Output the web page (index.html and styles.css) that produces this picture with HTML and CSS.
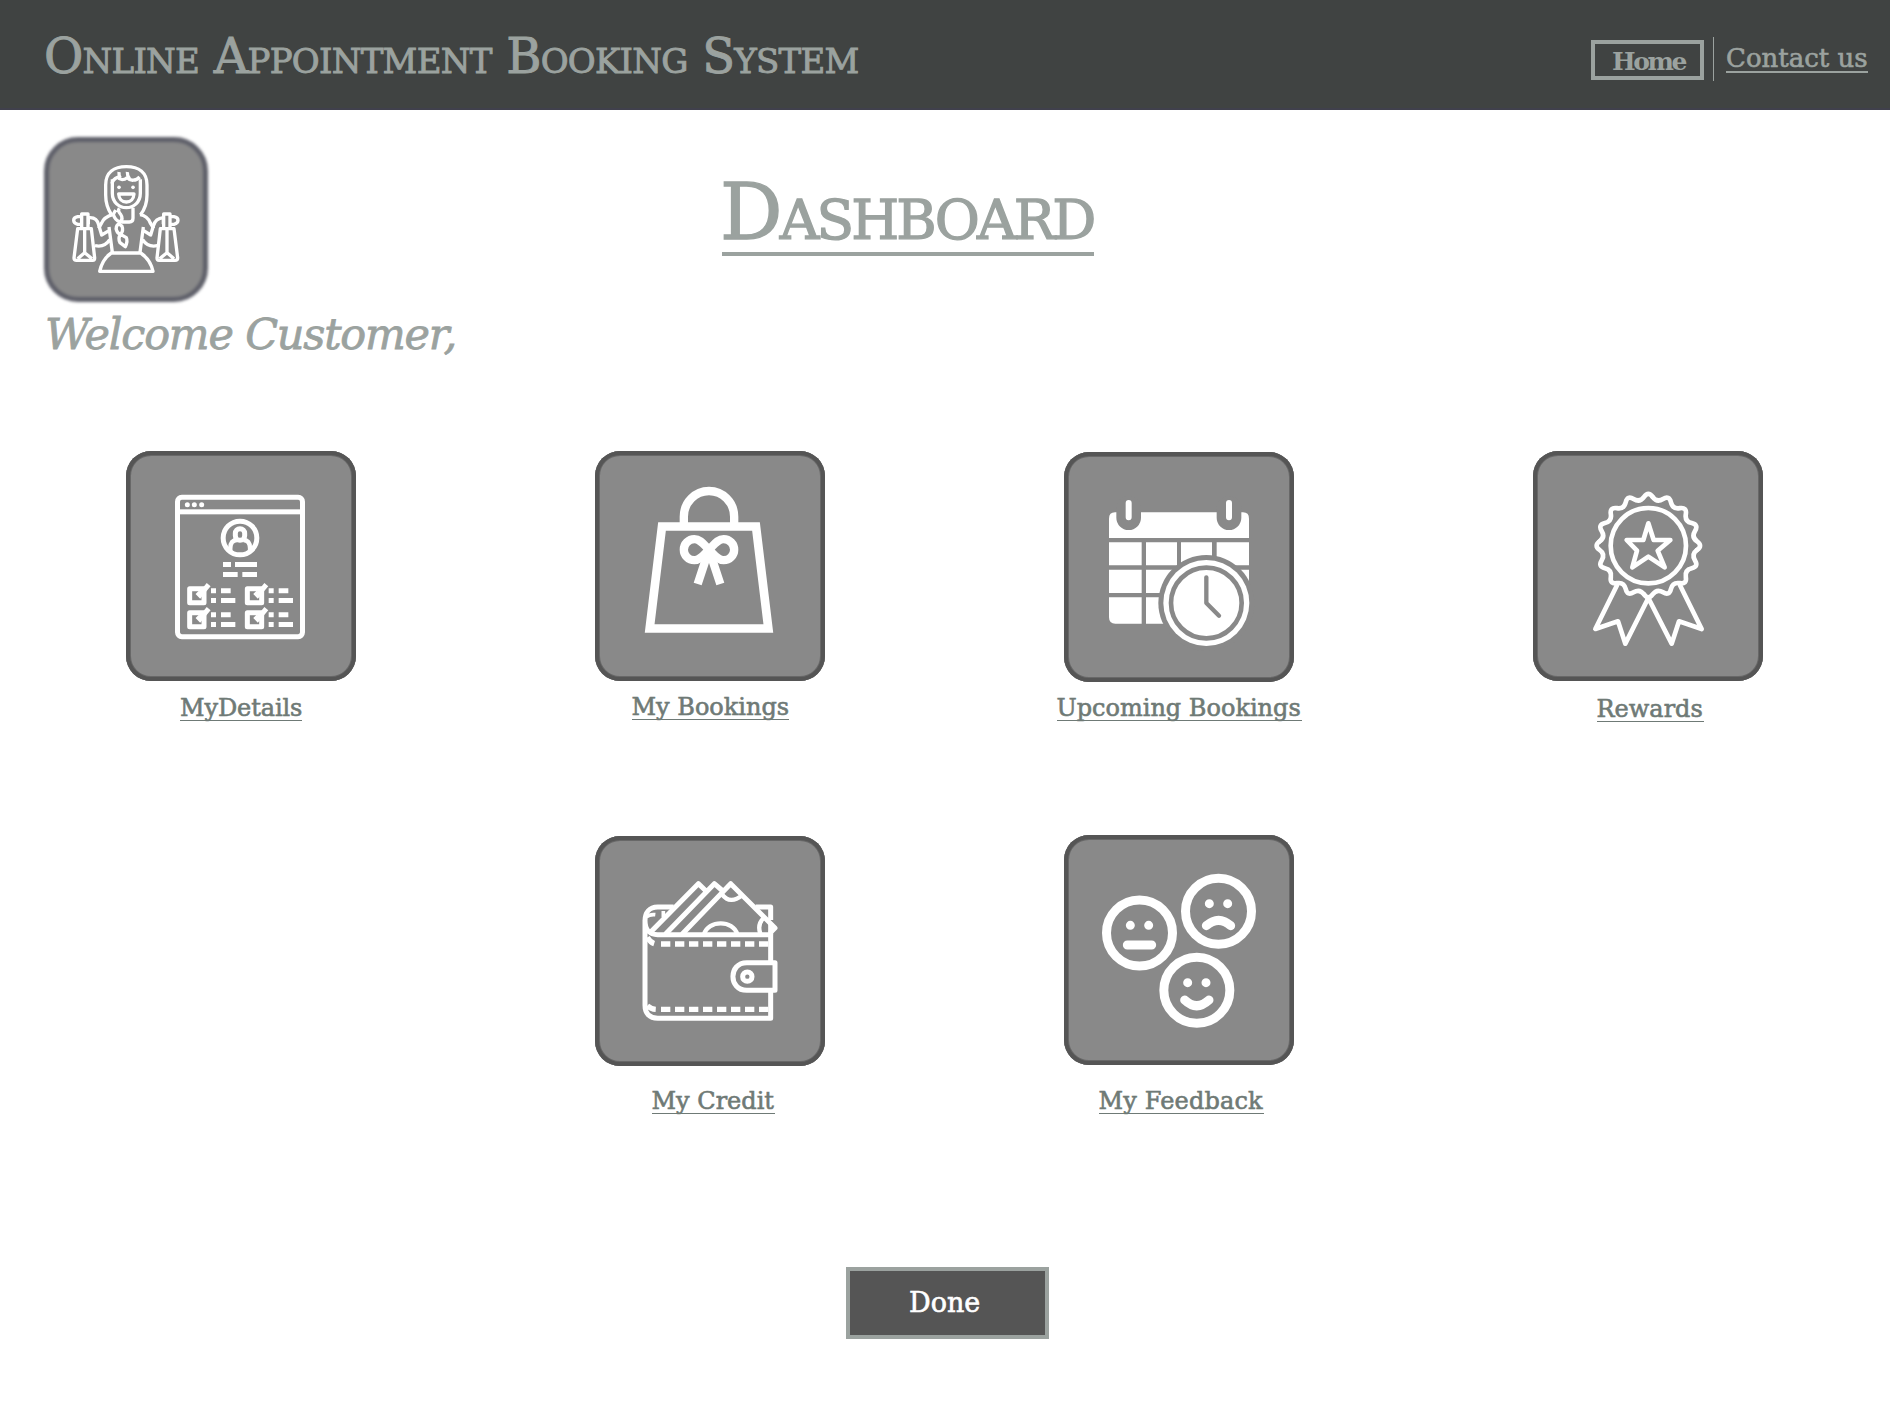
FILE: index.html
```html
<!DOCTYPE html>
<html lang="en">
<head>
<meta charset="utf-8">
<title>Dashboard</title>
<link rel="stylesheet" href="styles.css">
</head>
<body>
<header class="topbar">
  <div class="brand">Online Appointment Booking System</div>
  <nav class="nav">
    <a class="nav-home">Home</a>
    <span class="nav-divider"></span>
    <a class="nav-contact">Contact us</a>
  </nav>
</header>
<main>
  <section class="intro">
    <div class="profile">
      <div class="avatar">
        <svg viewBox="45 39 486 489" width="162" height="163" fill="none" stroke="#fff" stroke-width="10" stroke-linejoin="round">
          <path d="M244 268C232 250 227 232 227 210V180C227 142 252 125 289 125S351 142 351 180V210C351 236 344 254 331 270"/>
          <path d="M247 163V205C247 232 267 248 289 248S331 232 331 205V163"/>
          <path d="M246 176C248 166 256 160 263 157C270 166 282 166 291 158C301 169 318 168 329 156M267 141Q266 152 271 159M292 141Q291 152 299 162"/>
          <circle cx="267" cy="187" r="5.5" fill="#fff" stroke="none"/><circle cx="309" cy="187" r="5.5" fill="#fff" stroke="none"/>
          <path d="M266 207H312C311 222 302 231 289 231S267 222 266 207Z"/>
          <path d="M309 248V280Q309 291 298 291H274M268 250Q262 258 272 268Q281 281 270 291Q255 286 250 268L257 255"/>
          <path d="M267 296Q255 304 260 317Q264 327 272 328Q281 316 276 304ZM272 328Q263 339 270 353L286 365Q294 349 289 338Z"/>
          <path d="M248 269Q222 276 215 294L206 310M330 269Q352 272 361 294L371 310"/>
          <path d="M177 278Q201 276 206 300L215 330L237 317M400 278Q376 280 370 303L362 330L341 317M237 306L247 382M340 306L330 382M195 362Q224 368 239 344M382 362Q353 368 338 344"/>
          <path d="M244 384H332C350 396 364 416 369 439H209C214 416 226 396 244 384Z"/>
          <g id="bags"><path d="M154 275H143Q131 277 131 286T143 298H154M175 275V298M155 310V267H174V310M143 311H184L194 399Q194 406 188 406H140Q132 406 132 399ZM164 312V381M143 401L164 383L186 401"/></g>
          <use href="#bags" transform="matrix(-1 0 0 1 575 0)"/>
        </svg>
      </div>
      <p class="welcome">Welcome Customer,</p>
    </div>
    <h1 class="page-title">Dashboard</h1>
  </section>

  <section class="tiles">
    <a class="item">
      <div class="tile">
        <svg viewBox="33 33 690 690" width="230" height="230" fill="#fff">
          <rect x="187.500" y="172" width="375" height="418" rx="13" fill="none" stroke="#fff" stroke-width="15"/>
          <rect x="190" y="208" width="370" height="15"/>
          <circle cx="217" cy="194" r="7.500"/><circle cx="238" cy="194" r="7.500"/><circle cx="260" cy="194" r="7.500"/>
          <g fill="none" stroke="#fff" stroke-width="15"><circle cx="375" cy="294" r="50.500"/><rect x="361" y="266" width="28" height="35" rx="14"/><path d="M346 337V325Q346 300 366 300M405 337V325Q405 300 385 300" stroke-width="13"/></g>
          <path d="M324 366h24v15h-24zM360 366h66v15h-66zM324 396h44v15h-44zM382 396h44v15h-44z"/>
          <g id="check"><path fill="none" stroke="#fff" stroke-width="15" stroke-linejoin="round" d="M224 446H267V488H224Z"/><path fill="none" stroke="#fff" stroke-width="15" d="M247 457L255 465L281 434"/><path d="M288 445h15v15h-15zM318 445h29v15h-29zM288 474h15v15h-15zM318 474h43v15h-43z"/></g>
          <use href="#check" x="173"/><use href="#check" y="72"/><use href="#check" x="173" y="72"/>
        </svg>
      </div>
      <span class="label l-details">MyDetails</span>
    </a>
    <a class="item">
      <div class="tile">
        <svg viewBox="30 33 690 690" width="230" height="230" fill="none" stroke="#fff" stroke-width="25">
          <path d="M231 259.500H513L550 565.500H194Z" stroke-width="26"/>
          <path d="M296.500 258V230A75.500 77 0 0 1 447.500 230V258"/>
          <path d="M372 329C358 316 347 297.500 328 297.500A31.500 31.500 0 0 0 328 360.500C347 360.500 358 342 372 329C386 316 397 297.500 416 297.500A31.500 31.500 0 0 1 416 360.500C397 360.500 386 342 372 329"/>
          <path d="M370 335L338 432M374 335L406 432"/>
        </svg>
      </div>
      <span class="label l-bookings">My Bookings</span>
    </a>
    <a class="item item-upcoming">
      <div class="tile">
        <svg viewBox="57 36 690 690" width="230" height="230">
          <path fill="#fff" d="M192 236Q192 217 210 217H594Q612 217 612 236V294H192ZM192 307H290V376H192ZM303 307H396V376H303ZM408 307H501V376H408ZM515 307H612V376H515ZM192 389H290V459H192ZM303 389H396V459H303ZM515 389H612V459H515ZM192 472H290V551H211Q192 551 192 532ZM303 472H396V551H303Z"/>
          <path stroke="#898989" stroke-width="74" stroke-linecap="round" d="M251 205V233M552 205V233"/>
          <path stroke="#fff" stroke-width="18" stroke-linecap="round" d="M251 189V232M552 189V232"/>
          <circle cx="484" cy="489" r="144" fill="#898989"/><circle cx="484" cy="489" r="129" fill="#fff"/><circle cx="484" cy="489" r="106" fill="none" stroke="#898989" stroke-width="14"/>
          <path d="M484 412V489L522 527" fill="none" stroke="#898989" stroke-width="13" stroke-linecap="round" stroke-linejoin="round"/>
        </svg>
      </div>
      <span class="label l-upcoming">Upcoming Bookings</span>
    </a>
    <a class="item">
      <div class="tile">
        <svg viewBox="39 33 690 690" width="230" height="230" fill="none" stroke="#fff" stroke-width="14" stroke-linecap="round" stroke-linejoin="round">
          <g transform="translate(385 317)">
            <path id="scallop" d="M12.800 -146.300Q25.600 -128.500 44.200 -140Q62.800 -151.500 67.800 -130.200Q72.800 -108.900 94.400 -112.500Q116 -116 112.500 -94.400Q108.900 -72.800 130.200 -67.800Q151.500 -62.800 140 -44.200Q128.500 -25.600 146.300 -12.800Q164 0 146.300 12.800"/>
            <use href="#scallop" transform="rotate(90)"/><use href="#scallop" transform="rotate(180)"/><use href="#scallop" transform="rotate(270)"/>
          </g>
          <circle cx="385" cy="317" r="113"/>
          <path d="M385 250L401 300H451L413 332L434 382L385 350L337 382L351 332L320 300H370Z"/>
          <path d="M291 436L226 567L294 544L316 611L385 474L455 611L477 544L545 567L480 436"/>
        </svg>
      </div>
      <span class="label l-rewards">Rewards</span>
    </a>
    <a class="item item-credit">
      <div class="tile">
        <svg viewBox="30 33 690 690" width="230" height="230" fill="none" stroke="#fff" stroke-width="15" stroke-linejoin="round">
          <path d="M266 246H218C193 246 180 263 180 287C180 313 194 329 218 329H557V580H218C193 580 180 565 180 541V285"/>
          <path d="M512 246H557V285M557 295V329"/>
          <path d="M198 320L340 176L360 195M241 328L388 176L410 195M291 328L437 176L570 309L555 324"/>
          <path d="M411 208Q436 240 471 211M357 328C369 284 445 284 457 328M536 279Q516 298 526 326" stroke-width="13"/>
          <path d="M184 276Q194 267 211 269M235 258V277" stroke-width="11"/>
          <path d="M187 337Q199 357 215 357M187 542Q199 553 215 553M228 357H554M228 553H554" stroke-dasharray="28 14" stroke-width="16"/>
          <path fill="#898989" d="M570 413H485C430 413 430 496 485 496H570Z"/>
          <circle cx="487" cy="455" r="14"/>
        </svg>
      </div>
      <span class="label l-credit">My Credit</span>
    </a>
    <a class="item item-feedback">
      <div class="tile">
        <svg viewBox="27 30 690 690" width="230" height="230" fill="none" stroke="#fff" stroke-width="27" stroke-linecap="round">
          <g id="face"><circle cx="253.500" cy="324" r="99"/><path d="M226 301h.01M281 301h.01"/></g>
          <use href="#face" x="237" y="-65"/><use href="#face" x="172" y="172"/>
          <path d="M217 360H290M454 302Q491 270 527 302M389 525Q425 559 462 525"/>
        </svg>
      </div>
      <span class="label l-feedback">My Feedback</span>
    </a>
  </section>
  <button class="done">Done</button>
</main>
</body>
</html>
```
FILE: styles.css
```css
* { box-sizing: border-box; }
body { margin: 0; width: 1890px; height: 1417px; overflow: hidden; background: #fff; font-family: "DejaVu Serif", serif; color: #9ba29f; }
.topbar { display: flex; justify-content: space-between; height: 110px; background: #404342; border-bottom: 2px solid #40404c; }
.brand { padding-left: 44px; font-size: 48px; line-height: 112px; font-variant: small-caps; letter-spacing: -0.75px; white-space: nowrap; -webkit-text-stroke: 0.9px; }
.nav { display: flex; align-items: flex-start; padding-right: 22px; }
.nav-home { width: 113px; height: 40px; margin-top: 40px; border: 4px solid #9ba29f; padding-left: 17px; font-size: 25px; line-height: 35px; font-weight: bold; letter-spacing: -2.4px; }
.nav-divider { width: 1px; height: 44px; margin: 37px 12px 0 9px; background: #9ba29f; }
.nav-contact { width: 142px; height: 40px; margin-top: 33px; padding-top: 9px; border-bottom: 2px solid #9ba29f; font-size: 26px; line-height: 32px; letter-spacing: 0; white-space: nowrap; -webkit-text-stroke: 0.6px; }
.intro { display: flex; height: 341px; padding-left: 45px; }
.profile { width: 677px; padding-top: 28px; }
.avatar { position: relative; width: 162px; height: 163px; }
.avatar::before { content: ""; position: absolute; inset: -1px; border-radius: 34px; background: #898989; border: 5px solid #5e5f69; filter: blur(1.5px); }
.avatar svg { position: relative; display: block; }
.welcome { margin: 8px 0 0; font-size: 43px; line-height: 50px; font-style: italic; letter-spacing: -1.2px; white-space: nowrap; -webkit-text-stroke: 0.8px; }
.page-title { width: 372px; height: 92px; margin: 54px 0 0; border-bottom: 4px solid #9ba29f; font-size: 78px; line-height: 97px; font-weight: normal; font-variant: small-caps; letter-spacing: -2.9px; text-indent: -2px; white-space: nowrap; -webkit-text-stroke: 1.3px; }
.tiles { display: grid; grid-template-columns: repeat(4, 230px); grid-template-rows: 384px 384px; column-gap: 239px; padding-left: 126px; }
.item { display: flex; flex-direction: column; align-items: center; }
.item-upcoming { padding-top: 1px; }
.item-credit { grid-column: 2; padding-top: 1px; }
.item-feedback { grid-column: 3; }
.tile { flex: none; width: 230px; height: 230px; border-radius: 25px; background: #898989; box-shadow: inset 0 0 0 4px #555, inset 0 0 0 5px #686868; }
.tile svg { display: block; }
.label { height: 30px; margin-top: 10px; border-bottom: 1px solid #6f7a76; color: #6f7a76; font-size: 24px; line-height: 35px; white-space: nowrap; -webkit-text-stroke: 0.6px; }
.l-details { width: 122px; letter-spacing: -0.1px; }
.l-bookings { width: 157px; margin-top: 9px; }
.l-upcoming { width: 245px; margin-top: 9px; }
.l-rewards { width: 107px; margin: 11px 0 0 4px; }
.l-credit { width: 123px; margin: 18px 0 0 6px; }
.l-feedback { width: 165px; margin: 19px 0 0 4px; letter-spacing: 0.15px; }
.done { display: block; width: 203px; height: 72px; margin: 48px 0 0 846px; padding: 0 0 0 59px; border: 4px solid #9ba29f; background: #555; color: #fff; font: 27px/62px "DejaVu Serif", serif; text-align: left; -webkit-text-stroke: 0.6px; }
```
